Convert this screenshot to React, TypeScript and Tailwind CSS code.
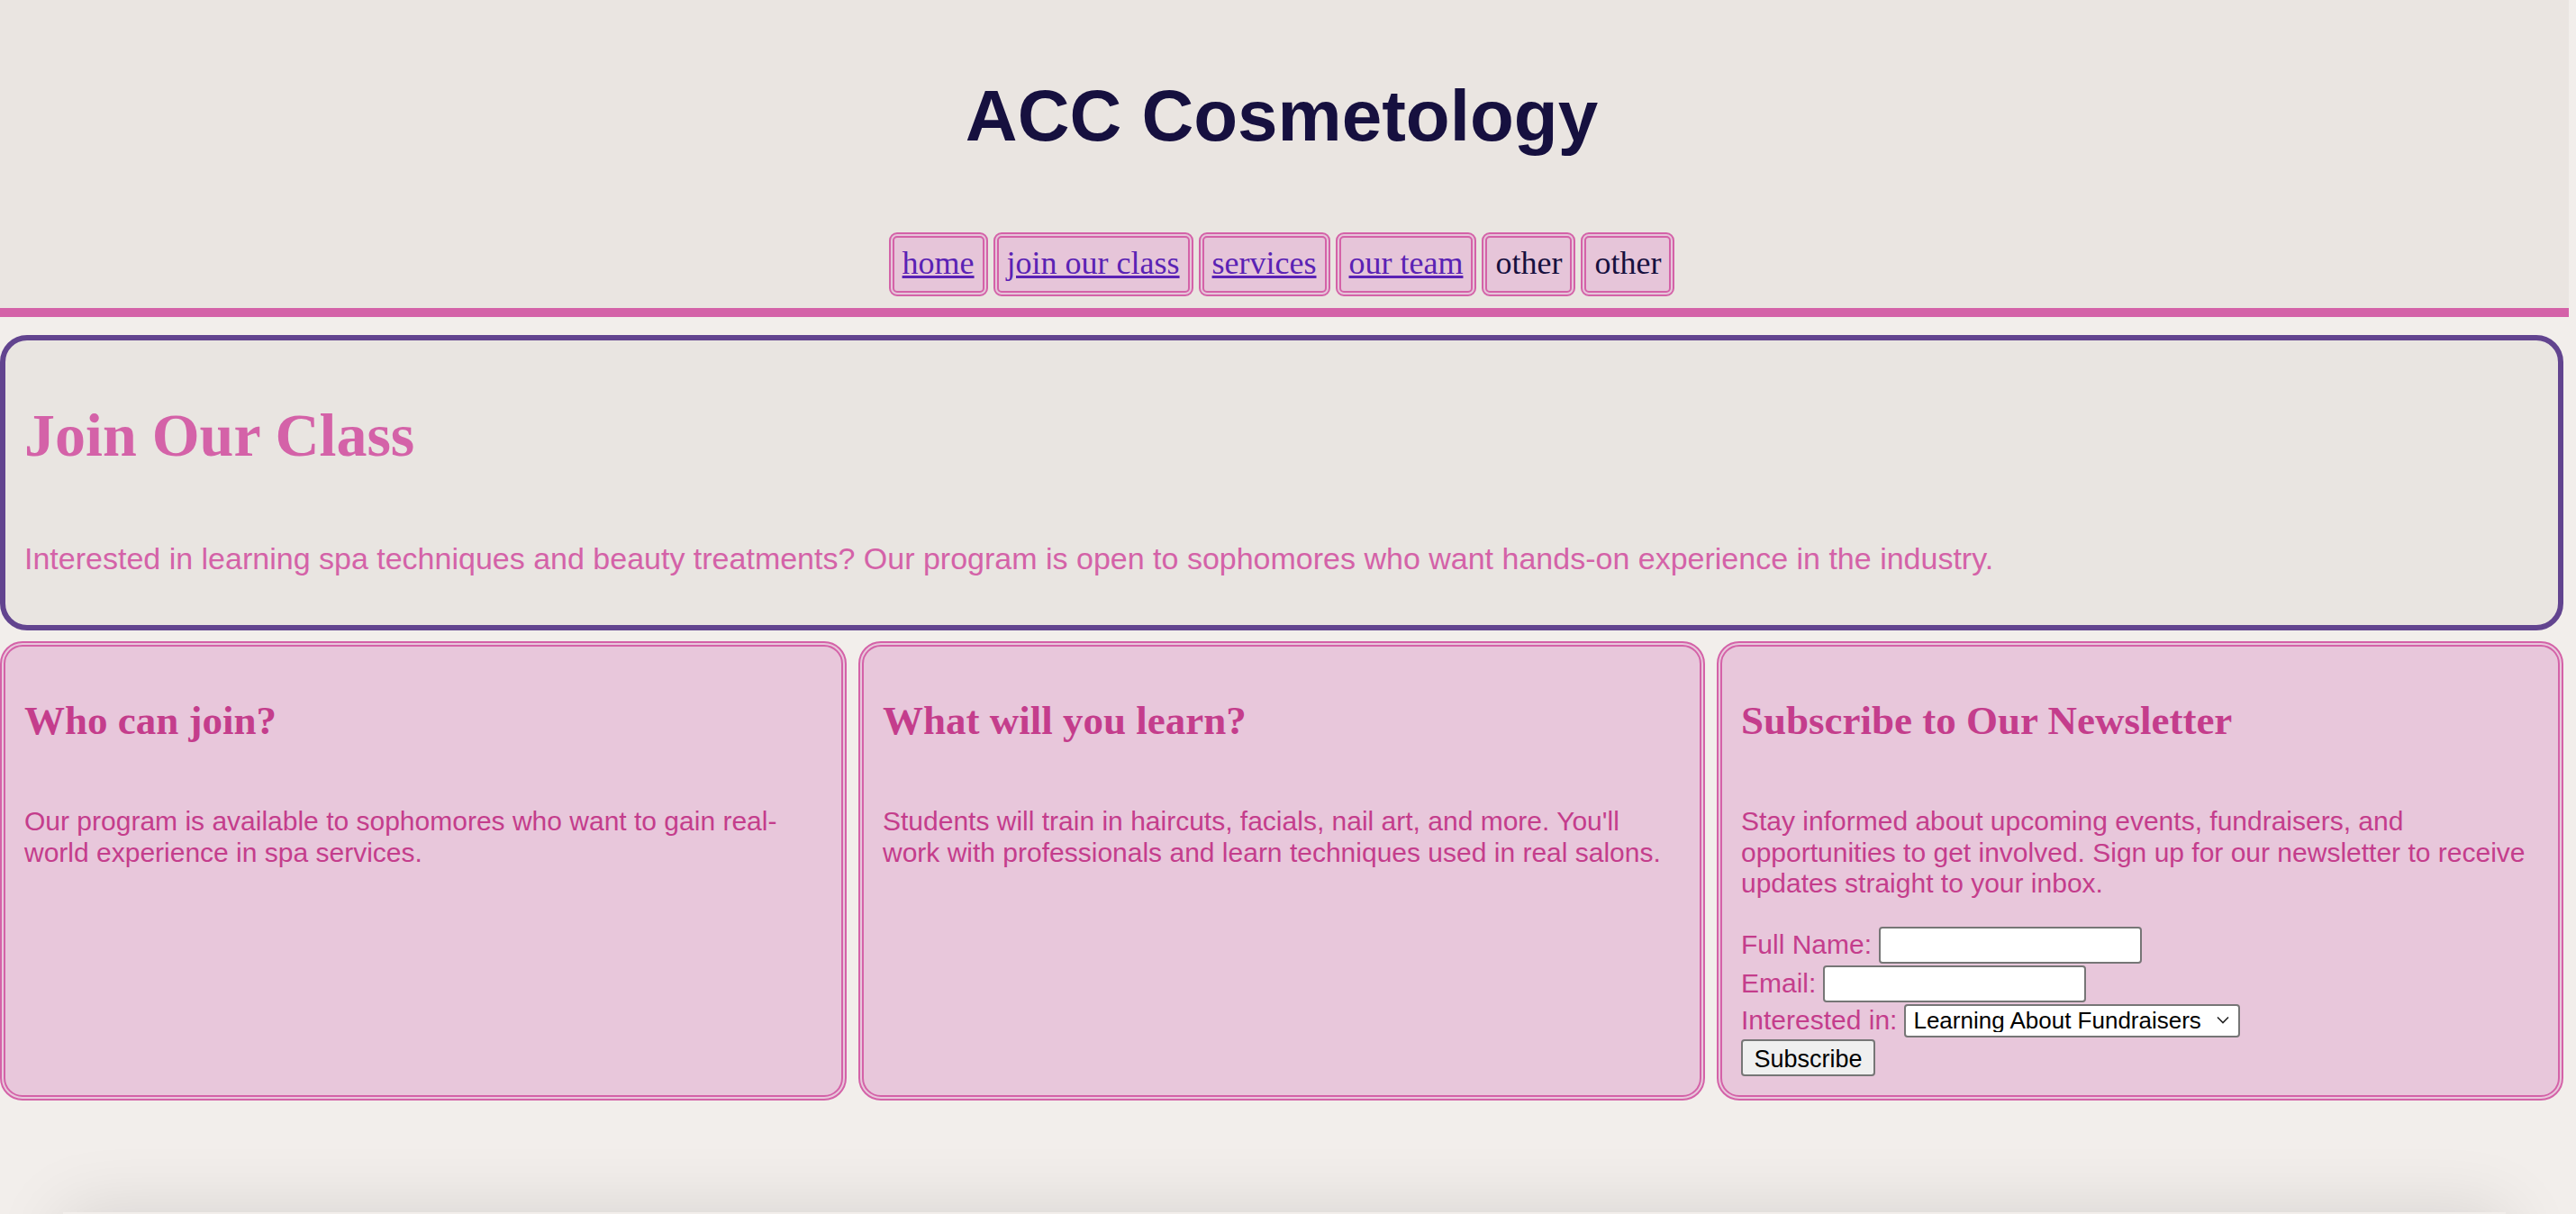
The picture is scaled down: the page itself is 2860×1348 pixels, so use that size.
const navItems = [
  { label: "home", link: true },
  { label: "join our class", link: true },
  { label: "services", link: true },
  { label: "our team", link: true },
  { label: "other", link: false },
  { label: "other", link: false },
];

const cardHeading =
  "mt-[35px] mb-0 font-['Liberation_Serif',serif] text-[45px] font-bold leading-[1.15] text-[#c43d8c]";
const cardText =
  "mt-[69px] font-['Liberation_Sans',Arial,sans-serif] text-[30px] leading-[1.15] text-[#c43d8c]";

const InfoCard = ({ title, text }: { title: string; text: string }) => {
  return (
    <div className="rounded-[25px] border-[6px] border-double border-[#d462a8] bg-[#e8c7db] pl-[21px] pr-[22px] pt-[22px]">
      <h3 className={cardHeading}>{title}</h3>
      <p className={cardText}>{text}</p>
    </div>
  );
};

const NewsletterCard = () => {
  const labelCls = "text-[30px] leading-[1.15] text-[#c43d8c]";
  const inputCls =
    "h-[41px] w-[292px] rounded-[4px] border-2 border-[#767676] bg-white px-[4px] text-[26px] text-black outline-none";

  return (
    <div className="rounded-[25px] border-[6px] border-double border-[#d462a8] bg-[#e8c7db] pl-[21px] pr-[22px] pt-[22px] pb-[21px] font-['Liberation_Sans',Arial,sans-serif]">
      <h3 className={cardHeading}>Subscribe to Our Newsletter</h3>
      <p className={cardText}>
        Stay informed about upcoming events, fundraisers, and opportunities to
        get involved. Sign up for our newsletter to receive updates straight to
        your inbox.
      </p>
      <form
        className="mt-[30px] flex flex-col items-start gap-[2px]"
        onSubmit={(e) => e.preventDefault()}
      >
        <div className="flex items-center gap-[8px]">
          <label htmlFor="full_name" className={labelCls}>
            Full Name:
          </label>
          <input id="full_name" type="text" className={inputCls} />
        </div>
        <div className="flex items-center gap-[8px]">
          <label htmlFor="email" className={labelCls}>
            Email:
          </label>
          <input id="email" type="email" className={inputCls} />
        </div>
        <div className="flex items-center gap-[8px]">
          <label htmlFor="interest" className={labelCls}>
            Interested in:
          </label>
          <div className="relative">
            <select
              id="interest"
              className="h-[37px] w-[373px] appearance-none rounded-[4px] border-2 border-[#767676] bg-white pl-[8px] text-[26px] leading-none text-black outline-none"
            >
              <option>Learning About Fundraisers</option>
              <option>Volunteering at Events</option>
              <option>Booking Services</option>
            </select>
            <svg
              className="pointer-events-none absolute right-[12px] top-[13px] h-[9px] w-[14px]"
              viewBox="0 0 14 9"
              fill="none"
            >
              <path d="M1 1.5 L7 7.5 L13 1.5" stroke="#222" strokeWidth="1.6" />
            </svg>
          </div>
        </div>
        <button
          type="submit"
          className="h-[41px] w-[149px] rounded-[4px] border-2 border-[#767676] bg-[#efefef] text-[27px] text-black"
        >
          Subscribe
        </button>
      </form>
    </div>
  );
};

const App = () => {
  return (
    <div className="h-screen w-full overflow-hidden bg-[#f2eeeb]">
      <div className="w-[2852px]">
        <header className="flex flex-col items-center border-b-[10px] border-[#d462a8] bg-[#eae5e1] pt-[83px] pr-[6px] pb-[13px]">
          <h1 className="font-['Liberation_Sans',Arial,sans-serif] text-[80px] font-bold leading-[92px] text-[#16103f]">
            ACC Cosmetology
          </h1>
          <nav className="mt-[83px] flex gap-[6px]">
            {navItems.map((item, i) => (
              <div
                key={i}
                className="rounded-[9px] border-[6px] border-double border-[#d462a8] bg-[#e6c5d9] px-[9px] pt-[8px] pb-[10px] font-['Liberation_Serif',serif] text-[36px] leading-[1.15]"
              >
                {item.link ? (
                  <a href="#" className="text-[#5a22b4] underline">
                    {item.label}
                  </a>
                ) : (
                  <span className="text-[#16103f]">{item.label}</span>
                )}
              </div>
            ))}
          </nav>
        </header>

        <main className="mt-[20px] w-[2846px]">
          <section className="rounded-[30px] border-[6px] border-[#62448f] bg-[#e9e5e1] pl-[21px] pr-[22px] pt-[66px] pb-[54px]">
            <h2 className="font-['Liberation_Serif',serif] text-[68px] font-bold leading-[1.15] text-[#d462a8]">
              Join Our Class
            </h2>
            <p className="mt-[78px] font-['Liberation_Sans',Arial,sans-serif] text-[34px] leading-[1.15] text-[#d462a8]">
              Interested in learning spa techniques and beauty treatments? Our
              program is open to sophomores who want hands-on experience in the
              industry.
            </p>
          </section>

          <div className="mt-[12px] grid grid-cols-3 gap-[13px]">
            <InfoCard
              title="Who can join?"
              text="Our program is available to sophomores who want to gain real-world experience in spa services."
            />
            <InfoCard
              title="What will you learn?"
              text="Students will train in haircuts, facials, nail art, and more. You'll work with professionals and learn techniques used in real salons."
            />
            <NewsletterCard />
          </div>
        </main>

        <footer className="mx-[70px] mt-[124px] h-[120px] bg-[#f2eeeb] shadow-[0_0_80px_rgba(0,0,0,0.12)]" />
      </div>
    </div>
  );
};

export default App;
